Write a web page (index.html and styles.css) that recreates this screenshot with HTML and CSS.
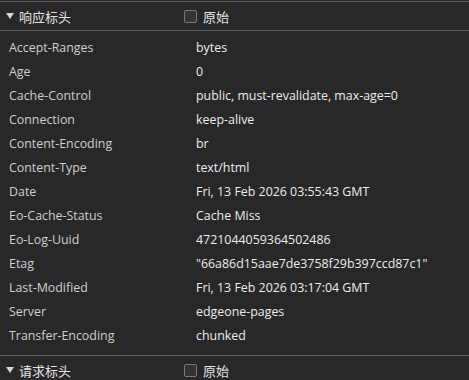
FILE: index.html
```html
<!DOCTYPE html>
<html lang="zh">
<head>
    <meta charset="UTF-8">
    <title>响应标头</title>
    <link rel="stylesheet" href="styles.css">
</head>
<body>

    <div class="panel">
        <div class="section-head">
            <div class="title"><span class="arrow"></span>响应标头</div>
            <label class="raw"><span class="box"></span>原始</label>
        </div>

        <div class="headers">
            <div class="row"><span class="key">Accept-Ranges</span><span class="val">bytes</span></div>
            <div class="row"><span class="key">Age</span><span class="val">0</span></div>
            <div class="row"><span class="key">Cache-Control</span><span class="val">public, must-revalidate, max-age=0</span></div>
            <div class="row"><span class="key">Connection</span><span class="val">keep-alive</span></div>
            <div class="row"><span class="key">Content-Encoding</span><span class="val">br</span></div>
            <div class="row"><span class="key">Content-Type</span><span class="val">text/html</span></div>
            <div class="row"><span class="key">Date</span><span class="val">Fri, 13 Feb 2026 03:55:43 GMT</span></div>
            <div class="row"><span class="key">Eo-Cache-Status</span><span class="val">Cache Miss</span></div>
            <div class="row"><span class="key">Eo-Log-Uuid</span><span class="val">4721044059364502486</span></div>
            <div class="row"><span class="key">Etag</span><span class="val">"66a86d15aae7de3758f29b397ccd87c1"</span></div>
            <div class="row"><span class="key">Last-Modified</span><span class="val">Fri, 13 Feb 2026 03:17:04 GMT</span></div>
            <div class="row"><span class="key">Server</span><span class="val">edgeone-pages</span></div>
            <div class="row"><span class="key">Transfer-Encoding</span><span class="val">chunked</span></div>
        </div>

        <div class="section-head">
            <div class="title"><span class="arrow"></span>请求标头</div>
            <label class="raw"><span class="box"></span>原始</label>
        </div>
    </div>

</body>
</html>
```

FILE: styles.css
```css
html, body {
    margin: 0;
    padding: 0;
    background: #282828;
}
body {
    font-family: "Open Sans", "Noto Sans CJK SC", sans-serif;
    font-size: 12.4px;
    color: #d6d6d6;
    overflow: hidden;
}
.panel {
    width: 469px;
    border-top: 1px solid #5e5e5e;
    margin-top: 1px;
}
.section-head {
    display: flex;
    align-items: center;
    height: 28px;
}
.section-head + .headers {
    border-top: 1px solid #5e5e5e;
}
.headers {
    padding: 4px 0 8px;
    border-bottom: 1px solid #5e5e5e;
}
.title {
    width: 184px;
    display: flex;
    align-items: center;
    font-size: 13px;
    color: #e3e3e3;
}
.arrow {
    width: 0;
    height: 0;
    margin: 0 5px 0 6px;
    border-left: 4px solid transparent;
    border-right: 4px solid transparent;
    border-top: 6px solid #d8d8d8;
}
.raw {
    display: flex;
    align-items: center;
    font-size: 13px;
    color: #e3e3e3;
}
.box {
    width: 11px;
    height: 11px;
    margin-right: 6px;
    border: 1px solid #7a7a7a;
    border-radius: 2px;
    background: #333;
}
.row {
    display: flex;
    height: 24px;
    align-items: center;
}
.key {
    width: 187px;
    padding-left: 9px;
    color: #cfcfcf;
}
.val {
    color: #ececec;
}
```
